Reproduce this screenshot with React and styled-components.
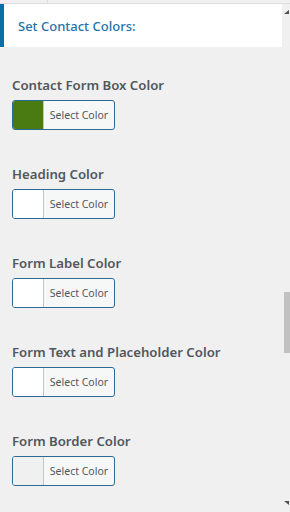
import React from 'react'
import styled, { createGlobalStyle } from 'styled-components'

const Global = createGlobalStyle`
  html, body {
    margin: 0;
    padding: 0;
    background: #f0f0f0;
  }
  body {
    font-family: "Noto Sans", "Open Sans", sans-serif;
  }
`

const Frame = styled.div`
  position: relative;
  width: 290px;
  height: 512px;
  overflow: hidden;
  display: flex;
  flex-direction: column;
  background: #f0f0f0;
`

const TopStrip = styled.div`
  height: 3px;
  border-bottom: 1px solid #dcdcde;
  display: flex;
  > span {
    width: 47px;
    border-right: 1px solid #dcdcde;
  }
`

const Body = styled.div`
  flex: 1;
  display: flex;
  min-height: 0;
`

const Content = styled.div`
  width: 282px;
  display: flex;
  flex-direction: column;
`

const Header = styled.div`
  height: 43px;
  background: #fff;
  border-left: 4px solid #0a6fa6;
  display: flex;
  align-items: center;
  padding-left: 14px;
  font-size: 13px;
  font-weight: 500;
  color: #1f73a8;
`

const Sections = styled.div`
  padding: 28px 12px 0;
  display: flex;
  flex-direction: column;
  gap: 34px;
`

const Section = styled.div`
  display: flex;
  flex-direction: column;
  align-items: flex-start;
  gap: 5px;
`

const Label = styled.div`
  font-size: 13.2px;
  line-height: 20px;
  font-weight: 600;
  color: #50575e;
`

const ColorButton = styled.button`
  display: flex;
  align-items: stretch;
  height: 30px;
  width: 103px;
  padding: 0;
  border: 1px solid #2c6a96;
  border-radius: 3px;
  background: #f6f7f7;
  overflow: hidden;
  font-family: inherit;
  cursor: pointer;
`

const Swatch = styled.span`
  width: 30px;
  background: ${p => p.color};
  border-right: 1px solid #c3c4c7;
`

const ButtonText = styled.span`
  flex: 1;
  display: flex;
  align-items: center;
  justify-content: center;
  font-size: 10.5px;
  color: #50575e;
`

const Scrollbar = styled.div`
  width: 8px;
  display: flex;
  flex-direction: column;
  align-items: flex-end;
  padding-top: 288px;
`

const Thumb = styled.div`
  width: 6px;
  height: 61px;
  background: #c1c1c1;
`

const Arrow = styled.svg`
  position: absolute;
  right: 1px;
  width: 5px;
  height: 4px;
`

const fields = [
  { label: 'Contact Form Box Color', color: '#4a7a12' },
  { label: 'Heading Color', color: '#ffffff' },
  { label: 'Form Label Color', color: '#ffffff' },
  { label: 'Form Text and Placeholder Color', color: '#ffffff' },
  { label: 'Form Border Color', color: '#f0f0f0' },
]

export default function App() {
  return (
    <Frame>
      <Global />
      <TopStrip><span /></TopStrip>
      <Body>
        <Content>
          <Header>Set Contact Colors:</Header>
          <Sections>
            {fields.map(f => (
              <Section key={f.label}>
                <Label>{f.label}</Label>
                <ColorButton type="button">
                  <Swatch color={f.color} />
                  <ButtonText>Select Color</ButtonText>
                </ColorButton>
              </Section>
            ))}
          </Sections>
        </Content>
        <Scrollbar>
          <Thumb />
        </Scrollbar>
      </Body>
      <Arrow viewBox="0 0 5 4" style={{ top: 10 }}>
        <path d="M0 4 L5 4 L5 0 Z" fill="#505050" />
      </Arrow>
      <Arrow viewBox="0 0 5 4" style={{ top: 501 }}>
        <path d="M0 0 L5 0 L5 4 Z" fill="#505050" />
      </Arrow>
    </Frame>
  )
}
